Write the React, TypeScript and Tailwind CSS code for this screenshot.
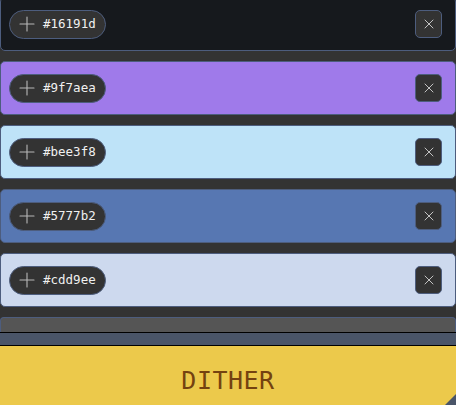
import { Plus, X } from "lucide-react";

const colors = ["#16191d", "#9f7aea", "#bee3f8", "#5777b2", "#cdd9ee"];

const mono = { fontFamily: '"DejaVu Sans Mono", "Liberation Mono", monospace' };

const ColorRow = ({ hex }: { hex: string }) => {
  return (
    <div
      className="h-[54px] shrink-0 rounded-[5px] border border-[#4d5d7e] flex items-center justify-between pl-2 pr-[13px]"
      style={{ backgroundColor: hex }}
    >
      <button className="h-[29px] flex items-center gap-[4px] rounded-full border border-[#4d5d7e] bg-[#333333] pl-[5px] pr-[9px]">
        <Plus size={24} strokeWidth={1.1} className="text-[#b8b8b8]" />
        <span className="text-[12.5px] text-[#f0f0f0]" style={mono}>
          {hex}
        </span>
      </button>
      <button className="w-[27px] h-[28px] flex items-center justify-center rounded-[5px] border border-[#4d5d7e] bg-[#333333]">
        <X size={16} strokeWidth={1.2} className="text-[#e8e8e8]" />
      </button>
    </div>
  );
};

export default function App() {
  return (
    <div className="w-[456px] h-[405px] overflow-hidden bg-[#333333] flex flex-col">
      <div className="flex flex-col gap-[10px] mt-[-3px]">
        {colors.map((c) => (
          <ColorRow key={c} hex={c} />
        ))}
      </div>
      <div className="mt-[10px] h-[15px] shrink-0 rounded-t-[4px] border-t border-x border-[#4d5d7e] bg-[#555555]" />
      <div className="h-[14px] shrink-0 border-y border-black bg-[#4a5568]" />
      <div className="relative flex-1 bg-[#ecc94b] flex items-start justify-center pt-[16px]">
        <span className="text-[25px] tracking-[0.5px] text-[#744210]" style={mono}>
          DITHER
        </span>
        <svg className="absolute right-0 bottom-0" width="11" height="11" viewBox="0 0 11 11">
          <polygon points="11,0 11,11 0,11" fill="#4a5568" />
        </svg>
      </div>
    </div>
  );
}
